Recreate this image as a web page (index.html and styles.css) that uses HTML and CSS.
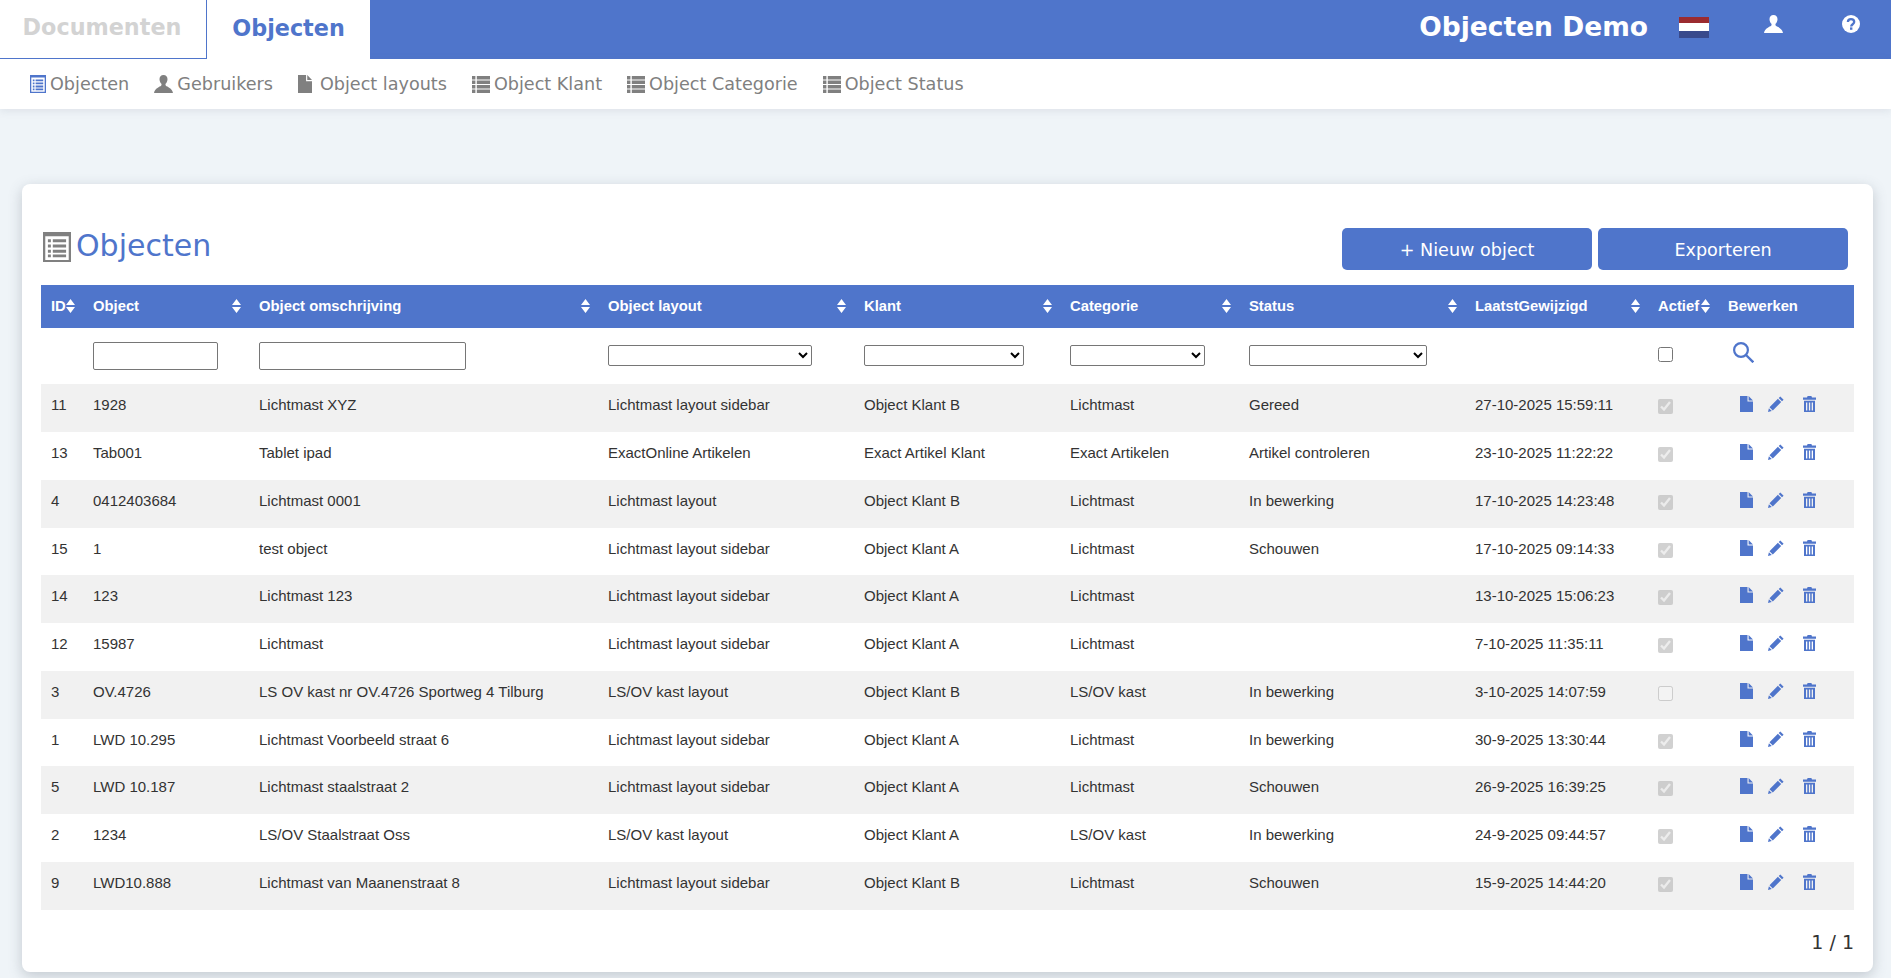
FILE: index.html
```html
<!DOCTYPE html>
<html lang="nl">
<head>
<meta charset="utf-8">
<title>Objecten Demo</title>
<link rel="stylesheet" href="styles.css">
</head>
<body>
<svg class="sprite" aria-hidden="true">
  <symbol id="i-file" viewBox="0 0 13 16" preserveAspectRatio="none"><path d="M0 0h7.500v5.500H13V16H0zM8.600 0 13 4.400H8.600z"/></symbol>
  <symbol id="i-pencil" viewBox="0 0 16 16"><path d="M12.300.4 15.600 3.700 14 5.300 10.700 2zM9.900 2.800 13.200 6.100 4.800 14.500 1.500 11.200zM.9 12.200 3.800 15.100 0 16z"/></symbol>
  <symbol id="i-trash" viewBox="0 0 13 16"><path fill-rule="evenodd" d="M4.600 0h3.800l.6 1.500H13v2.300H0V1.500h4zM1 4.800h11V16H1zM3 6.500v8h1.300v-8zM5.900 6.500v8h1.300v-8zM8.700 6.500v8H10v-8z"/></symbol>
  <symbol id="i-user" viewBox="0 0 19 18" preserveAspectRatio="none"><path d="M9.500 0C6.900 0 5.500 1.800 5.500 4.200c0 1.900.8 3.500 1.900 4.600.3.7.2 1.500-.3 2-1.200 1-6.300 2.300-7.100 7.200h19c-.8-4.900-5.900-6.200-7.100-7.200-.5-.5-.6-1.300-.3-2 1.100-1.100 1.900-2.700 1.900-4.600C13.500 1.800 12.100 0 9.500 0z"/></symbol>
  <symbol id="i-list" viewBox="0 0 18 17" preserveAspectRatio="none"><path d="M0 0h3.400v3.500H0zM4.800 0H18v3.500H4.800zM0 4.500h3.400V8H0zM4.800 4.500H18V8H4.800zM0 9h3.400v3.500H0zM4.800 9H18v3.500H4.800zM0 13.500h3.400V17H0zM4.800 13.500H18V17H4.800z"/></symbol>
  <symbol id="i-listalt" viewBox="0 0 16 18" preserveAspectRatio="none"><path fill-rule="evenodd" d="M0 0h16v18H0zM1.300 2.600v14.200h13.400V2.600zM2.800 4.400h1.700v1.800H2.800zM5.600 4.400h7.600v1.800H5.600zM2.800 7.500h1.700v1.800H2.800zM5.600 7.500h7.600v1.800H5.600zM2.800 10.600h1.700v1.800H2.800zM5.600 10.600h7.600v1.800H5.600zM2.800 13.500h1.700v1.700H2.800zM5.600 13.500h7.600v1.700H5.600z"/></symbol>
  <symbol id="i-sort" viewBox="0 0 9 14"><path d="M4.500 0 9 6H0zM0 8h9l-4.500 6z"/></symbol>
</svg>

<header class="topbar">
  <nav class="tabs">
    <a class="tab tab-off">Documenten</a>
    <a class="tab tab-on">Objecten</a>
  </nav>
  <div class="brand">Objecten Demo</div>
  <div class="flag"><span class="flag-r"></span><span class="flag-w"></span><span class="flag-b"></span></div>
  <svg class="top-user"><use href="#i-user"/></svg>
  <svg class="top-help" viewBox="0 0 18 18"><circle cx="9" cy="9" r="9" fill="#fff"/><path d="M5.900 7.100C5.900 5.200 7.300 4.200 9 4.200s3.200 1 3.200 2.800c0 2.200-3 2.200-3 4.400" fill="none" stroke="#4f75cb" stroke-width="2.300"/><rect x="8" y="12.400" width="2.400" height="2.400" fill="#4f75cb"/></svg>
</header>

<nav class="subnav">
  <a class="sub"><svg class="ic-sub ic-alt"><use href="#i-listalt"/></svg>Objecten</a>
  <a class="sub"><svg class="ic-sub ic-user"><use href="#i-user"/></svg>Gebruikers</a>
  <a class="sub"><svg class="ic-sub ic-file"><use href="#i-file"/></svg>Object layouts</a>
  <a class="sub"><svg class="ic-sub"><use href="#i-list"/></svg>Object Klant</a>
  <a class="sub"><svg class="ic-sub"><use href="#i-list"/></svg>Object Categorie</a>
  <a class="sub"><svg class="ic-sub"><use href="#i-list"/></svg>Object Status</a>
</nav>

<main class="card">
  <div class="card-head">
    <h1 class="title"><svg class="title-ic"><use href="#i-listalt"/></svg><span class="title-txt">Objecten</span></h1>
    <div class="actions">
      <button class="btn">+ Nieuw object</button>
      <button class="btn">Exporteren</button>
    </div>
  </div>
  <table class="grid">
    <colgroup>
      <col class="c-id"><col class="c-obj"><col class="c-oms"><col class="c-lay"><col class="c-kl"><col class="c-cat"><col class="c-st"><col class="c-dt"><col class="c-ac"><col class="c-ed">
    </colgroup>
    <thead>
      <tr class="head">
        <th><div class="th"><span>ID</span><svg class="sort"><use href="#i-sort"/></svg></div></th>
        <th><div class="th"><span>Object</span><svg class="sort"><use href="#i-sort"/></svg></div></th>
        <th><div class="th"><span>Object omschrijving</span><svg class="sort"><use href="#i-sort"/></svg></div></th>
        <th><div class="th"><span>Object layout</span><svg class="sort"><use href="#i-sort"/></svg></div></th>
        <th><div class="th"><span>Klant</span><svg class="sort"><use href="#i-sort"/></svg></div></th>
        <th><div class="th"><span>Categorie</span><svg class="sort"><use href="#i-sort"/></svg></div></th>
        <th><div class="th"><span>Status</span><svg class="sort"><use href="#i-sort"/></svg></div></th>
        <th><div class="th"><span>LaatstGewijzigd</span><svg class="sort"><use href="#i-sort"/></svg></div></th>
        <th><div class="th"><span>Actief</span><svg class="sort"><use href="#i-sort"/></svg></div></th>
        <th><div class="th"><span>Bewerken</span></div></th>
      </tr>
      <tr class="filter">
        <td></td>
        <td><input class="f-in f-obj" type="text"></td>
        <td><input class="f-in f-oms" type="text"></td>
        <td><select class="f-sel f-lay"></select></td>
        <td><select class="f-sel f-kl"></select></td>
        <td><select class="f-sel f-cat"></select></td>
        <td><select class="f-sel f-st"></select></td>
        <td></td>
        <td><input class="chk f-chk" type="checkbox"></td>
        <td><svg class="search" viewBox="0 0 21 21"><circle cx="8" cy="8" r="6.900" fill="none" stroke="#4f75cb" stroke-width="2.200"/><path d="M13 13 20.300 20.300" stroke="#4f75cb" stroke-width="2.400"/></svg></td>
      </tr>
    </thead>
    <tbody>
      <tr><td>11</td><td>1928</td><td>Lichtmast XYZ</td><td>Lichtmast layout sidebar</td><td>Object Klant B</td><td>Lichtmast</td><td>Gereed</td><td>27-10-2025 15:59:11</td><td class="cell-chk"><input class="chk" type="checkbox" checked disabled></td><td class="cell-ed"><span class="eds"><svg class="ed-file"><use href="#i-file"/></svg><svg class="ed-pen"><use href="#i-pencil"/></svg><svg class="ed-tr"><use href="#i-trash"/></svg></span></td></tr>
      <tr><td>13</td><td>Tab001</td><td>Tablet ipad</td><td>ExactOnline Artikelen</td><td>Exact Artikel Klant</td><td>Exact Artikelen</td><td>Artikel controleren</td><td>23-10-2025 11:22:22</td><td class="cell-chk"><input class="chk" type="checkbox" checked disabled></td><td class="cell-ed"><span class="eds"><svg class="ed-file"><use href="#i-file"/></svg><svg class="ed-pen"><use href="#i-pencil"/></svg><svg class="ed-tr"><use href="#i-trash"/></svg></span></td></tr>
      <tr><td>4</td><td>0412403684</td><td>Lichtmast 0001</td><td>Lichtmast layout</td><td>Object Klant B</td><td>Lichtmast</td><td>In bewerking</td><td>17-10-2025 14:23:48</td><td class="cell-chk"><input class="chk" type="checkbox" checked disabled></td><td class="cell-ed"><span class="eds"><svg class="ed-file"><use href="#i-file"/></svg><svg class="ed-pen"><use href="#i-pencil"/></svg><svg class="ed-tr"><use href="#i-trash"/></svg></span></td></tr>
      <tr><td>15</td><td>1</td><td>test object</td><td>Lichtmast layout sidebar</td><td>Object Klant A</td><td>Lichtmast</td><td>Schouwen</td><td>17-10-2025 09:14:33</td><td class="cell-chk"><input class="chk" type="checkbox" checked disabled></td><td class="cell-ed"><span class="eds"><svg class="ed-file"><use href="#i-file"/></svg><svg class="ed-pen"><use href="#i-pencil"/></svg><svg class="ed-tr"><use href="#i-trash"/></svg></span></td></tr>
      <tr><td>14</td><td>123</td><td>Lichtmast 123</td><td>Lichtmast layout sidebar</td><td>Object Klant A</td><td>Lichtmast</td><td></td><td>13-10-2025 15:06:23</td><td class="cell-chk"><input class="chk" type="checkbox" checked disabled></td><td class="cell-ed"><span class="eds"><svg class="ed-file"><use href="#i-file"/></svg><svg class="ed-pen"><use href="#i-pencil"/></svg><svg class="ed-tr"><use href="#i-trash"/></svg></span></td></tr>
      <tr><td>12</td><td>15987</td><td>Lichtmast</td><td>Lichtmast layout sidebar</td><td>Object Klant A</td><td>Lichtmast</td><td></td><td>7-10-2025 11:35:11</td><td class="cell-chk"><input class="chk" type="checkbox" checked disabled></td><td class="cell-ed"><span class="eds"><svg class="ed-file"><use href="#i-file"/></svg><svg class="ed-pen"><use href="#i-pencil"/></svg><svg class="ed-tr"><use href="#i-trash"/></svg></span></td></tr>
      <tr><td>3</td><td>OV.4726</td><td>LS OV kast nr OV.4726 Sportweg 4 Tilburg</td><td>LS/OV kast layout</td><td>Object Klant B</td><td>LS/OV kast</td><td>In bewerking</td><td>3-10-2025 14:07:59</td><td class="cell-chk"><input class="chk" type="checkbox" disabled></td><td class="cell-ed"><span class="eds"><svg class="ed-file"><use href="#i-file"/></svg><svg class="ed-pen"><use href="#i-pencil"/></svg><svg class="ed-tr"><use href="#i-trash"/></svg></span></td></tr>
      <tr><td>1</td><td>LWD 10.295</td><td>Lichtmast Voorbeeld straat 6</td><td>Lichtmast layout sidebar</td><td>Object Klant A</td><td>Lichtmast</td><td>In bewerking</td><td>30-9-2025 13:30:44</td><td class="cell-chk"><input class="chk" type="checkbox" checked disabled></td><td class="cell-ed"><span class="eds"><svg class="ed-file"><use href="#i-file"/></svg><svg class="ed-pen"><use href="#i-pencil"/></svg><svg class="ed-tr"><use href="#i-trash"/></svg></span></td></tr>
      <tr><td>5</td><td>LWD 10.187</td><td>Lichtmast staalstraat 2</td><td>Lichtmast layout sidebar</td><td>Object Klant A</td><td>Lichtmast</td><td>Schouwen</td><td>26-9-2025 16:39:25</td><td class="cell-chk"><input class="chk" type="checkbox" checked disabled></td><td class="cell-ed"><span class="eds"><svg class="ed-file"><use href="#i-file"/></svg><svg class="ed-pen"><use href="#i-pencil"/></svg><svg class="ed-tr"><use href="#i-trash"/></svg></span></td></tr>
      <tr><td>2</td><td>1234</td><td>LS/OV Staalstraat Oss</td><td>LS/OV kast layout</td><td>Object Klant A</td><td>LS/OV kast</td><td>In bewerking</td><td>24-9-2025 09:44:57</td><td class="cell-chk"><input class="chk" type="checkbox" checked disabled></td><td class="cell-ed"><span class="eds"><svg class="ed-file"><use href="#i-file"/></svg><svg class="ed-pen"><use href="#i-pencil"/></svg><svg class="ed-tr"><use href="#i-trash"/></svg></span></td></tr>
      <tr><td>9</td><td>LWD10.888</td><td>Lichtmast van Maanenstraat 8</td><td>Lichtmast layout sidebar</td><td>Object Klant B</td><td>Lichtmast</td><td>Schouwen</td><td>15-9-2025 14:44:20</td><td class="cell-chk"><input class="chk" type="checkbox" checked disabled></td><td class="cell-ed"><span class="eds"><svg class="ed-file"><use href="#i-file"/></svg><svg class="ed-pen"><use href="#i-pencil"/></svg><svg class="ed-tr"><use href="#i-trash"/></svg></span></td></tr>
    </tbody>
  </table>
  <div class="pager">1 / 1</div>
</main>
</body>
</html>
```

FILE: styles.css
```css
* { box-sizing: border-box; }
html, body { margin: 0; height: 100%; }
body {
  background: #eff4f8;
  font-family: "DejaVu Sans", Verdana, sans-serif;
  overflow: hidden;
}
.sprite { display: none; }

.topbar {
  display: flex;
  align-items: flex-start;
  height: 59px;
  background: #4f75cb;
}
.tabs { display: flex; height: 59px; }
.tab {
  display: flex;
  align-items: center;
  justify-content: center;
  height: 59px;
  padding-bottom: 4px;
  background: #fff;
  font-weight: bold;
  font-size: 22.3px;
}
.tab-off {
  width: 207px;
  padding-right: 2px;
  color: #d3d3d3;
  border-right: 1px solid #4f75cb;
  border-bottom: 1px solid #4f75cb;
}
.tab-on { width: 163px; color: #4f75cb; }
.brand {
  margin-left: auto;
  margin-top: 9px;
  color: #fff;
  font-weight: bold;
  font-size: 26.5px;
  line-height: 36px;
}
.flag {
  display: flex;
  flex-direction: column;
  width: 30px;
  height: 21px;
  margin: 17px 0 0 31px;
}
.flag-r { height: 6px; background: #9b2b30; }
.flag-w { height: 8px; background: #fff; }
.flag-b { height: 7px; background: #394a8c; }
.top-user { width: 19px; height: 18px; margin: 15px 0 0 55px; fill: #fff; }
.top-help { width: 18px; height: 18px; margin: 15px 31px 0 59px; }

.subnav {
  display: flex;
  align-items: center;
  gap: 25px;
  height: 50px;
  padding: 0 0 0 30px;
  background: #fff;
  box-shadow: 0 2px 8px rgba(90, 100, 120, 0.12);
}
.sub {
  display: flex;
  align-items: center;
  gap: 4px;
  color: #808080;
  font-size: 17.6px;
}
.ic-sub { width: 18px; height: 17px; fill: #808080; }
.ic-alt { width: 16px; height: 18px; fill: #4f75cb; }
.ic-user { width: 19px; height: 18px; }
.ic-file { width: 14px; height: 18px; margin-right: 4px; }

.card {
  margin: 75px 18px 0 22px;
  height: 788px;
  padding: 44px 19px 0;
  background: #fff;
  border-radius: 8px;
  box-shadow: 0 4px 14px rgba(80, 90, 105, 0.28);
}
.card-head {
  display: flex;
  justify-content: space-between;
  height: 57px;
}
.title {
  display: flex;
  align-items: center;
  gap: 5px;
  height: 30px;
  margin: 4px 0 0 2px;
  color: #4f75cb;
  font-weight: normal;
  font-size: 30px;
}
.title-txt { margin-top: -4px; }
.title-ic { width: 28px; height: 30px; fill: #808080; }
.actions { display: flex; gap: 6px; padding-right: 6px; }
.btn {
  width: 250px;
  height: 42px;
  padding: 2px 0 0;
  border: 0;
  border-radius: 5px;
  background: #4f75cb;
  color: #fff;
  font-family: inherit;
  font-size: 17.6px;
}

.grid {
  width: 100%;
  table-layout: fixed;
  border-collapse: collapse;
  font-family: "Liberation Sans", Arial, sans-serif;
  font-size: 15px;
  color: #333;
}
.c-id { width: 42px; }
.c-obj { width: 166px; }
.c-oms { width: 349px; }
.c-lay { width: 256px; }
.c-kl { width: 206px; }
.c-cat { width: 179px; }
.c-st { width: 226px; }
.c-dt { width: 183px; }
.c-ac { width: 70px; }
.c-ed { width: 136px; }

.head { height: 43px; background: #4f75cb; }
.head th { padding: 0 8px 0 10px; text-align: left; color: #fff; font-size: 14.8px; font-weight: bold; }
.th { display: flex; align-items: center; justify-content: space-between; height: 43px; padding-bottom: 2px; }
.sort { width: 9px; height: 14px; fill: #fff; flex: none; }

.filter { height: 56px; }
.filter td { padding: 0 10px; vertical-align: top; }
.f-in {
  display: block;
  margin-top: 14px;
  height: 28px;
  padding: 1px 2px;
  border: 1px solid #767676;
  border-radius: 2px;
  background: #fff;
}
.f-obj { width: 125px; }
.f-oms { width: 207px; }
.f-sel {
  display: block;
  margin-top: 17px;
  height: 21px;
  border: 1px solid #767676;
  border-radius: 2px;
  background: #fff;
}
.f-lay { width: 204px; }
.f-kl { width: 160px; }
.f-cat { width: 135px; }
.f-st { width: 178px; }
.chk { display: block; width: 15px; height: 15px; margin: 0; }
.f-chk { margin-top: 19px; }
.search { display: block; width: 21px; height: 21px; margin: 14px 0 0 5px; }

tbody tr { height: 48px; }
tbody tr:nth-child(4n) { height: 47px; }
tbody tr:nth-child(odd) { background: #f1f1f1; }
tbody td { padding: 13px 10px 0; vertical-align: top; line-height: 16px; }
tbody td.cell-chk { padding-top: 15px; }
tbody td.cell-ed { padding-top: 12px; }
.eds { display: flex; align-items: flex-start; margin-left: 12px; }
.ed-file, .ed-pen, .ed-tr { height: 16px; fill: #4f75cb; flex: none; }
.ed-file { width: 13px; }
.ed-pen { width: 16px; margin-left: 15px; }
.ed-tr { width: 13px; margin-left: 19px; }

.pager {
  margin-top: 21px;
  text-align: right;
  font-size: 19px;
  color: #333;
}
```
